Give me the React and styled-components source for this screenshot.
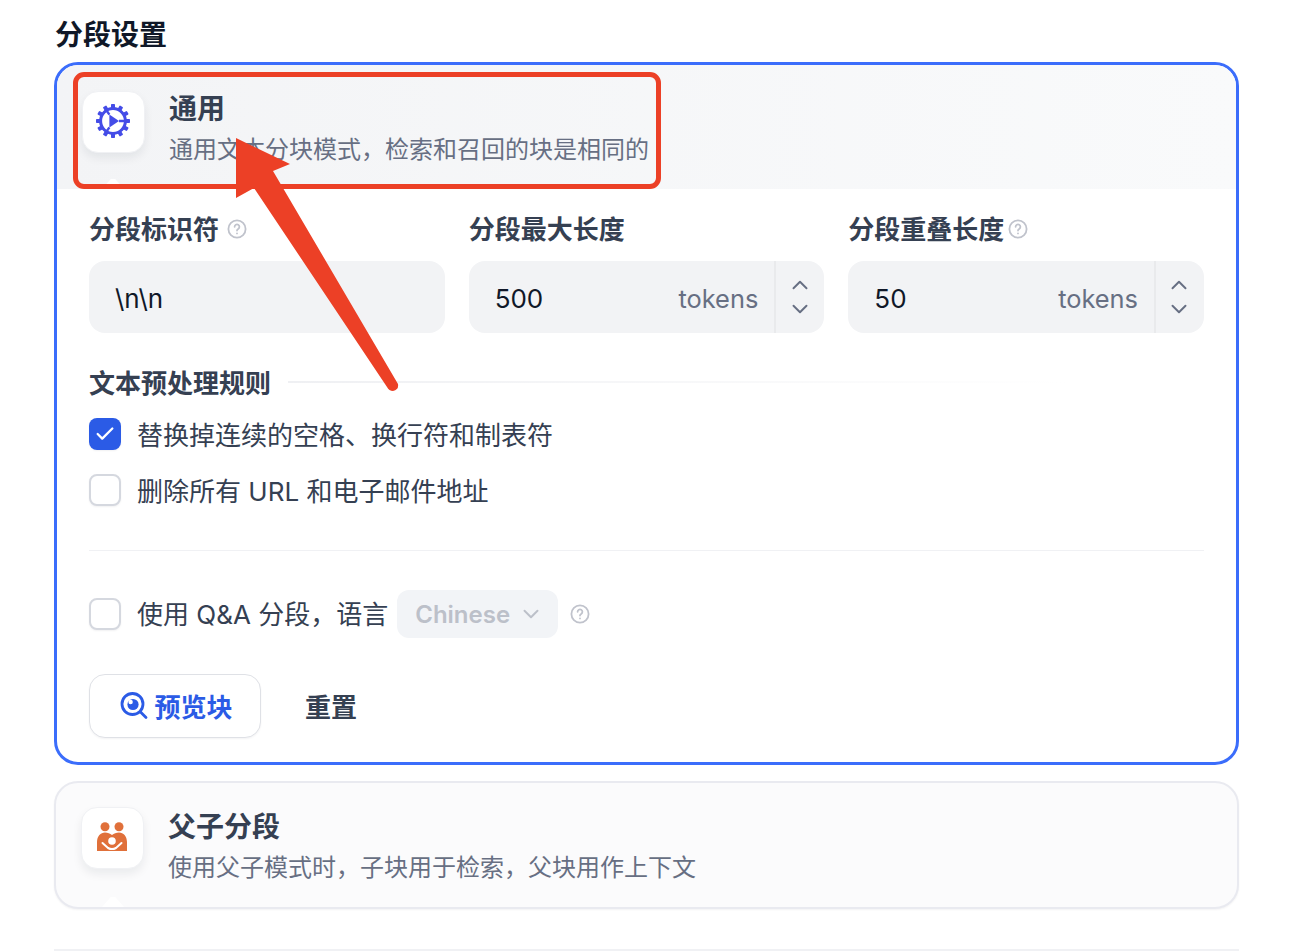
import React from 'react'
import styled, { createGlobalStyle } from 'styled-components'
import { ChevronUp, ChevronDown, Check } from 'lucide-react'

const GlobalStyle = createGlobalStyle`
  html, body {
    margin: 0;
    padding: 0;
    background: #fff;
    overflow: hidden;
    font-family: Inter, "Noto Sans CJK SC", sans-serif;
  }
  * { box-sizing: border-box; }
`

const Page = styled.div`
  position: relative;
  width: 1312px;
  height: 952px;
  padding: 15px 73px 0 54px;
`

const Heading = styled.h2`
  margin: 0 0 7px 1px;
  font-size: 28px;
  line-height: 40px;
  font-weight: 600;
  color: #101828;
`

const Card = styled.div`
  border-radius: 24px;
  overflow: hidden;
  border: ${p => (p.$active ? '3px solid #3b6dfb' : '2px solid #e9eaf0')};
  background: ${p => (p.$active ? '#fff' : '#fbfbfc')};
  box-shadow: ${p => (p.$active ? 'none' : '0 1px 2px rgba(16,24,40,.05)')};
  margin-bottom: 16px;
`

const CardHeader = styled.div`
  position: relative;
  display: flex;
  gap: 24px;
  padding: ${p => (p.$active ? '26px 25px 0' : '24px 25px 0')};
  height: 124px;
  background: ${p => (p.$active ? 'linear-gradient(to right, #f3f4f6, #f9fafb)' : 'transparent')};
`

const Caret = styled.span`
  position: absolute;
  left: ${p => (p.$active ? 45 : 46)}px;
  bottom: 0;
  width: 22px;
  height: 10px;
  background: #fff;
  clip-path: polygon(40% 0, 60% 0, 100% 100%, 0 100%);
`

const IconBox = styled.div`
  flex: none;
  width: 63px;
  height: 62px;
  padding: 0 2px 2px 0;
  display: flex;
  align-items: center;
  justify-content: center;
  background: #fff;
  border: 1px solid #f0f1f4;
  border-radius: 16px;
  box-shadow: 0 5px 10px rgba(16, 24, 40, 0.07);
`

const CardText = styled.div`
  margin-top: ${p => p.$top || 0}px;
`

const CardTitle = styled.div`
  font-size: 28px;
  line-height: 38px;
  font-weight: 600;
  color: #354052;
`

const CardDesc = styled.div`
  margin-top: 4px;
  font-size: 24px;
  line-height: 36px;
  color: #676f83;
`

const CardBody = styled.div`
  padding: 22px 32px 24px;
`

const FieldGrid = styled.div`
  display: grid;
  grid-template-columns: repeat(3, 1fr);
  gap: 24px;
`

const Label = styled.div`
  display: flex;
  align-items: center;
  gap: ${p => p.$gap || 8}px;
  height: 36px;
  margin-bottom: 14px;
  font-size: 26px;
  font-weight: 600;
  color: #354052;
`

const RaisedText = styled.span`
  margin-bottom: ${p => p.$by || 0}px;
`

const InputBox = styled.div`
  display: flex;
  align-items: center;
  height: 72px;
  border-radius: 16px;
  background: #f2f3f5;
  overflow: hidden;
`

const Value = styled.span`
  flex: 1;
  margin-top: 2px;
  padding-left: 26px;
  font-size: 26px;
  color: #101828;
`

const Unit = styled.span`
  margin-top: 2px;
  padding-right: 16px;
  font-size: 25.4px;
  color: #676f83;
`

const Spinner = styled.div`
  flex: none;
  width: 50px;
  height: 100%;
  padding-right: 1px;
  display: flex;
  flex-direction: column;
  align-items: center;
  justify-content: center;
  border-left: 2px solid #e9eaec;
  color: #676f83;

  svg {
    margin: -1px 0;
  }
`

const RuleHead = styled.div`
  display: flex;
  align-items: center;
  gap: 17px;
  height: 36px;
  margin: 32px 0 17px;
  font-size: 26px;
  font-weight: 600;
  color: #354052;
`

const RuleLine = styled.div`
  flex: 1;
  height: 2px;
  margin-top: -3px;
  background: linear-gradient(to right, #eff0f3, #ffffff 85%);
`

const CheckRow = styled.div`
  display: flex;
  align-items: center;
  gap: 16px;
  height: ${p => p.$height || 32}px;
  margin-bottom: ${p => p.$bottom || 0}px;
  font-size: 26px;
  color: #354052;
`

const Box = styled.span`
  flex: none;
  width: 32px;
  height: 32px;
  display: flex;
  align-items: center;
  justify-content: center;
  border-radius: 8px;
  color: #fff;
  background: ${p => (p.$checked ? '#2b5be6' : '#fff')};
  border: ${p => (p.$checked ? 'none' : '2px solid #d5d8df')};
  box-shadow: 0 1px 2px rgba(16, 24, 40, 0.06);
`

const Divider = styled.div`
  height: 1px;
  margin: 44px 0 39px;
  background: #f0f1f4;
`

const SelectBox = styled.div`
  display: flex;
  align-items: center;
  justify-content: space-between;
  width: 161px;
  height: 48px;
  margin-left: -7px;
  padding: 0 14px 0 18px;
  border-radius: 12px;
  background: #f2f4f7;
  color: #bcc0c9;
  font-size: 24px;
  font-weight: 600;
`

const HelpWrap = styled.span`
  display: inline-flex;
  margin-left: ${p => p.$left || 0}px;
`

const Actions = styled.div`
  display: flex;
  align-items: center;
  margin-top: 36px;
`

const PreviewButton = styled.div`
  display: flex;
  align-items: center;
  justify-content: center;
  gap: 5px;
  width: 172px;
  height: 64px;
  padding-left: 2px;
  border: 1.5px solid #dfe1e6;
  border-radius: 16px;
  background: #fff;
  box-shadow: 0 1px 2px rgba(16, 24, 40, 0.05);
  color: #2b5be6;
  font-size: 26px;
  font-weight: 600;
`

const ResetButton = styled.div`
  margin-left: 44px;
  margin-bottom: 2px;
  font-size: 26px;
  font-weight: 600;
  color: #354052;
`

const BottomLine = styled.div`
  margin-top: 40px;
  height: 2px;
  background: #f0f1f4;
`

const Overlay = styled.svg`
  position: absolute;
  left: 0;
  top: 0;
  pointer-events: none;
`

const Highlight = styled.div`
  position: absolute;
  left: 73px;
  top: 72px;
  width: 588px;
  height: 117px;
  border: 5px solid #ec4026;
  border-radius: 11px;
  pointer-events: none;
`

function Help() {
  return (
    <svg width="20" height="20" viewBox="0 0 20 20" fill="none" stroke="#c0c3cc" strokeWidth="1.8" strokeLinecap="round">
      <circle cx="10" cy="10" r="8.6" />
      <path d="M7.6 7.8a2.4 2.4 0 1 1 3.6 2.1c-.8.5-1.2.9-1.2 1.7" />
      <path d="M10 14.3v.1" />
    </svg>
  )
}

function GearIcon() {
  const teeth = Array.from({ length: 12 }, (_, i) => i * 30)
  return (
    <svg width="36" height="36" viewBox="0 0 36 36" fill="#444ce7">
      {teeth.map(deg => (
        <rect key={deg} x="16" y="1" width="4" height="5.5" rx="0.8" transform={`rotate(${deg} 18 18)`} />
      ))}
      <circle cx="18" cy="18" r="12.4" fill="none" stroke="#444ce7" strokeWidth="3" />
      <path d="M14.4 11.6 24 18l-9.6 6.4z" />
      <path d="M24 18h7M14.4 11.6 10.8 6.5M14.4 24.4l-3.6 5.1" stroke="#444ce7" strokeWidth="2.4" />
    </svg>
  )
}

function FamilyIcon() {
  return (
    <svg width="32" height="30" viewBox="0 0 30 30" fill="#e0703a">
      <circle cx="8" cy="4.8" r="4.5" />
      <circle cx="22" cy="4.8" r="4.5" />
      <path d="M0 29v-9c0-6 3.6-9.6 8-9.6 2.8 0 5 1 7 2.6 2-1.6 4.2-2.6 7-2.6 4.4 0 8 3.6 8 9.6v9z" />
      <circle cx="15" cy="19" r="3.8" fill="#fff" />
      <path d="M5.5 21 11 26q4 2.2 8 0l5.5-5" fill="none" stroke="#fff" strokeWidth="2" strokeLinecap="round" />
    </svg>
  )
}

function PreviewIcon() {
  return (
    <svg width="30" height="30" viewBox="0 0 30 30" fill="none" stroke="#2b5be6">
      <circle cx="13.5" cy="13" r="10.5" strokeWidth="2.8" />
      <path d="M21.5 21 27 26.5" strokeWidth="2.8" strokeLinecap="round" />
      <circle cx="14" cy="13.5" r="5.6" fill="#2b5be6" stroke="none" />
      <circle cx="11.6" cy="11" r="2.2" fill="#fff" stroke="none" />
    </svg>
  )
}

function Field({ label, value, unit, gap, help }) {
  return (
    <div>
      <Label $gap={gap}>
        <RaisedText $by={4}>{label}</RaisedText>
        {help && <Help />}
      </Label>
      <InputBox>
        <Value>{value}</Value>
        {unit && <Unit>{unit}</Unit>}
        {unit && (
          <Spinner>
            <ChevronUp size={26} strokeWidth={1.8} />
            <ChevronDown size={26} strokeWidth={1.8} />
          </Spinner>
        )}
      </InputBox>
    </div>
  )
}

export default function App() {
  return (
    <Page>
      <GlobalStyle />
      <Heading>分段设置</Heading>

      <Card $active>
        <CardHeader $active>
          <IconBox><GearIcon /></IconBox>
          <CardText $top={-1}>
            <CardTitle>通用</CardTitle>
            <CardDesc>通用文本分块模式，检索和召回的块是相同的</CardDesc>
          </CardText>
          <Caret $active />
        </CardHeader>
        <CardBody>
          <FieldGrid>
            <Field label="分段标识符" value="\n\n" gap={8} help />
            <Field label="分段最大长度" value="500" unit="tokens" />
            <Field label="分段重叠长度" value="50" unit="tokens" gap={4} help />
          </FieldGrid>

          <RuleHead>
            <RaisedText $by={4}>文本预处理规则</RaisedText>
            <RuleLine />
          </RuleHead>
          <CheckRow $bottom={24}>
            <Box $checked><Check size={22} strokeWidth={2.5} /></Box>
            <RaisedText $by={1}>替换掉连续的空格、换行符和制表符</RaisedText>
          </CheckRow>
          <CheckRow>
            <Box />
            <RaisedText $by={1}>删除所有 URL 和电子邮件地址</RaisedText>
          </CheckRow>

          <Divider />

          <CheckRow $height={48}>
            <Box />
            <RaisedText $by={4}>使用 Q&amp;A 分段，语言</RaisedText>
            <SelectBox>
              Chinese
              <ChevronDown size={26} strokeWidth={1.8} />
            </SelectBox>
            <HelpWrap $left={-4}><Help /></HelpWrap>
          </CheckRow>

          <Actions>
            <PreviewButton>
              <PreviewIcon />
              <RaisedText $by={2}>预览块</RaisedText>
            </PreviewButton>
            <ResetButton>重置</ResetButton>
          </Actions>
        </CardBody>
      </Card>

      <Card>
        <CardHeader>
          <IconBox><FamilyIcon /></IconBox>
          <CardText $top={1}>
            <CardTitle>父子分段</CardTitle>
            <CardDesc>使用父子模式时，子块用于检索，父块用作上下文</CardDesc>
          </CardText>
          <Caret />
        </CardHeader>
      </Card>

      <BottomLine />

      <Highlight />
      <Overlay width="1312" height="952" viewBox="0 0 1312 952">
        <path
          d="M236 138 290 164 273 171 398 384Q399 390 393 391 389 391 387 387L254 188 236 198Z"
          fill="#ec4026"
        />
      </Overlay>
    </Page>
  )
}
